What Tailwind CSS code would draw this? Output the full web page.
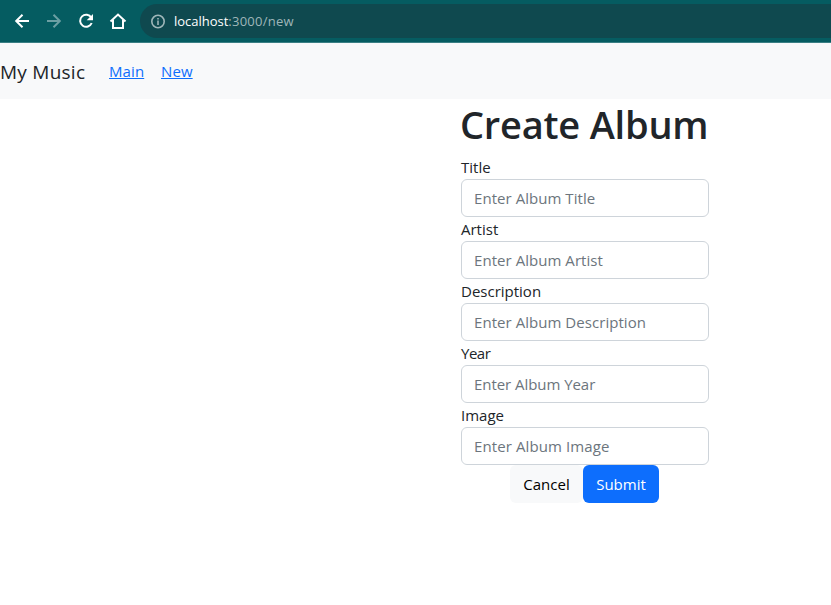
<!DOCTYPE html>
<html lang="en">
<head>
<meta charset="utf-8">
<title>My Music</title>
<script src="https://cdn.jsdelivr.net/npm/@tailwindcss/browser@4"></script>
</head>
<body class="h-[605px] overflow-hidden bg-white font-['Open_Sans','Noto_Sans',sans-serif] text-[15px] leading-6 text-[#212529]">
<header class="flex h-[43px] items-start border-b border-[#3a7f84] bg-[#055c61] pt-1">
  <div class="flex h-[34px] shrink-0 items-center gap-3 pl-3 text-white">
    <svg class="size-5" viewBox="0 0 20 20" fill="none" stroke="currentColor" stroke-width="2"><path d="M17 10H4.500M10.500 3.800L4.200 10l6.300 6.200"/></svg>
    <svg class="size-5 text-[#6c9fa3]" viewBox="0 0 20 20" fill="none" stroke="currentColor" stroke-width="2"><path d="M3 10h12.500M9.500 3.800l6.300 6.200-6.300 6.200"/></svg>
    <svg class="size-5" viewBox="0 0 20 20" fill="none" stroke="currentColor" stroke-width="2"><path d="M15.300 6.700A6 6 0 1 0 15.700 12"/><path d="M17 3v6.300h-6.300z" fill="currentColor" stroke="none"/></svg>
    <svg class="size-5" viewBox="0 0 20 20" fill="none" stroke="currentColor" stroke-width="2"><path d="M2.500 10.500L10 3.500l7.500 7M5 9v8h10V9"/></svg>
  </div>
  <div class="ml-3 flex h-[34px] flex-1 items-center rounded-l-full bg-[#0f494f] pl-[11px] text-[13px] text-[#9fb6b9]">
    <svg class="mr-2 size-[15px]" viewBox="0 0 15 15" fill="none" stroke="currentColor" stroke-width="1.600"><circle cx="7" cy="7.500" r="6.200"/><path d="M7 6.500v4.500M7 4v1.500"/></svg>
    <span class="tracking-[-0.02px] text-white">localhost</span><span class="tracking-[0.25px]">:3000/new</span>
  </div>
</header>
<nav class="flex h-14 items-center bg-[#f8f9fa]">
  <a class="mr-6 w-[85px] whitespace-nowrap pt-px text-[19px] tracking-[0.25px]">My Music</a>
  <a class="mr-4 w-9 text-[15px] tracking-[0.1px] text-[#0d6efd]" href="#"><span class="underline">Main</span></a>
  <a class="tracking-[0.1px] text-[#0d6efd] underline" href="#">New</a>
</nav>
<main class="ml-[461px] w-[248px]">
  <h1 class="-ml-px mb-2 h-12 whitespace-nowrap text-[38px] font-semibold leading-[51px] tracking-[-0.22px]">Create Album</h1>
  <form class="flex flex-col">
    <label class="h-6" for="title">Title</label>
    <input id="title" class="h-[38px] rounded-md border border-[#ced4da] px-3 tracking-[0.05px] placeholder:text-[#6c757d]" placeholder="Enter Album Title">
    <label class="h-6" for="artist">Artist</label>
    <input id="artist" class="h-[38px] rounded-md border border-[#ced4da] px-3 tracking-[0.05px] placeholder:text-[#6c757d]" placeholder="Enter Album Artist">
    <label class="h-6" for="description">Description</label>
    <input id="description" class="h-[38px] rounded-md border border-[#ced4da] px-3 tracking-[0.05px] placeholder:text-[#6c757d]" placeholder="Enter Album Description">
    <label class="h-6 tracking-[-0.5px]" for="year">Year</label>
    <input id="year" class="h-[38px] rounded-md border border-[#ced4da] px-3 tracking-[-0.05px] placeholder:text-[#6c757d]" placeholder="Enter Album Year">
    <label class="h-6" for="image">Image</label>
    <input id="image" class="h-[38px] rounded-md border border-[#ced4da] px-3 tracking-[0.1px] placeholder:text-[#6c757d]" placeholder="Enter Album Image">
    <div class="flex justify-center pr-px">
      <button type="button" class="h-[38px] w-[73px] rounded-md bg-[#f8f9fa] text-black">Cancel</button>
      <button type="submit" class="h-[38px] w-[76px] rounded-md bg-[#0d6efd] text-white">Submit</button>
    </div>
  </form>
</main>
</body>
</html>
